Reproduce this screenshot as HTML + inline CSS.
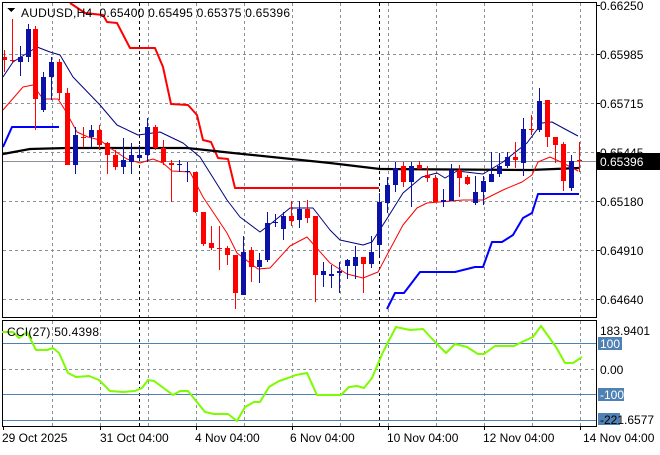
<!DOCTYPE html>
<html><head><meta charset="utf-8"><style>
html,body{margin:0;padding:0;background:#fff;}
body{width:660px;height:450px;overflow:hidden;font-family:"Liberation Sans",sans-serif;}
svg text{font-family:"Liberation Sans",sans-serif;font-size:12px;fill:#000;white-space:pre;}
</style></head><body>
<svg id="s" width="660" height="450" xmlns="http://www.w3.org/2000/svg" shape-rendering="crispEdges">
<rect width="660" height="450" fill="#fff"/>
<g id="grid" stroke="#8a9098" stroke-dasharray="3,3" stroke-width="1"></g>
<line x1="139.5" y1="3" x2="139.5" y2="317" stroke="#000" stroke-dasharray="3,3"/>
<line x1="379.5" y1="3" x2="379.5" y2="317" stroke="#000" stroke-dasharray="3,3"/>
<line x1="139.5" y1="321" x2="139.5" y2="426" stroke="#000" stroke-dasharray="3,3"/>
<line x1="379.5" y1="321" x2="379.5" y2="426" stroke="#000" stroke-dasharray="3,3"/>
<line x1="3" y1="161.5" x2="596" y2="161.5" stroke="#8a9098"/>
<g shape-rendering="auto" fill="none" stroke-linejoin="round">
<polyline stroke="#ff0000" stroke-width="2" points="70,3 85,13 103,15 107,22 117,23 130,48 155,48 163,67 171,104 188,105 197,115 203,140 211,142 218,158 228,159 235,188 379,188"/>
<polyline stroke="#0000ff" stroke-width="2" points="3,147 12,127 59,127"/>
<polyline stroke="#0000ff" stroke-width="2" points="387,309 395,293 404,293 420,272 455,272 475,267 483,267 492,242 502,242 513,235 523,218 532,213 538,194 579,194"/>
<polyline stroke="#000" stroke-width="2.2" points="3,154 30,149 67,148 187,148 233,153 330,163 380,169 530,170 579,168"/>
<polyline stroke="#000080" stroke-width="1" points="3,77 13,62 37,47 50,52 60,55 73,77 100,105 117,125 138,135 160,132 183,143 200,157 227,200 240,217 260,232 273,222 290,208 313,208 330,230 340,240 363,245 372,242 388,217 403,193 422,177 437,173 445,178 457,171 483,174 503,162 527,143 542,123 552,122 563,128 578,136"/>
<polyline stroke="#ff0000" stroke-width="1" points="3,110 23,87 33,85 43,99 58,99 65,110 77,132 88,137 100,140 110,148 127,159 140,163 153,159 163,163 172,171 190,172 203,197 227,233 237,253 258,269 270,268 290,246 307,237 330,263 347,274 363,278 378,272 388,253 403,225 417,208 427,203 463,200 483,200 503,190 522,182 532,175 538,162 550,157 563,163 578,171"/>
</g>
<g id="cd"></g>
<rect x="2.5" y="2.5" width="594" height="315" fill="none" stroke="#000"/>
<rect x="2.5" y="320.5" width="594" height="106" fill="none" stroke="#000"/>
<line x1="3" y1="343.5" x2="596" y2="343.5" stroke="#4f81b4"/>
<line x1="3" y1="394.5" x2="596" y2="394.5" stroke="#4f81b4"/>
<line x1="3" y1="420.5" x2="596" y2="420.5" stroke="#4f81b4"/>
<line x1="3" y1="369.5" x2="596" y2="369.5" stroke="#8a9098" stroke-dasharray="3,3"/>
<polyline shape-rendering="auto" fill="none" stroke="#7cfc00" stroke-width="2" stroke-linejoin="round" points="2,332 13,332 19,338 27,332 36,350 47,350 53,348 59,353 68,373 76,377 89,376 99,380 110,391 123,392 135,391 142,388 148,380 154,381 173,395 180,391 188,391 205,412 214,414 228,414 237,421 245,407 254,402 260,402 269,387 279,381 288,378 296,375 307,373 317,395 341,395 349,387 357,386 364,388 372,378 383,352 396,327 410,330 423,329 436,343 446,353 455,344 467,347 478,354 484,354 495,346 514,346 522,342 533,337 541,326 556,347 565,363 573,363 582,357"/>
<g stroke="#000" id="ticks"></g>
<g font-size="12">
<text x="600" y="10">0.66250</text>
<text x="600" y="59">0.65985</text>
<text x="600" y="108">0.65715</text>
<text x="600" y="157">0.65445</text>
<text x="600" y="206">0.65180</text>
<text x="600" y="255">0.64910</text>
<text x="600" y="304">0.64640</text>
</g>
<g stroke="#000"><line x1="596" y1="5.5" x2="600" y2="5.5"/><line x1="596" y1="54.5" x2="600" y2="54.5"/><line x1="596" y1="103.5" x2="600" y2="103.5"/><line x1="596" y1="152.5" x2="600" y2="152.5"/><line x1="596" y1="201.5" x2="600" y2="201.5"/><line x1="596" y1="250.5" x2="600" y2="250.5"/><line x1="596" y1="299.5" x2="600" y2="299.5"/></g>
<rect x="597" y="153" width="63" height="17" fill="#000"/>
<text x="600" y="166" style="fill:#fff">0.65396</text>
<text x="600" y="335">183.9401</text>
<rect x="598" y="337" width="24" height="13" fill="#4f81b4"/>
<text x="600" y="348" style="fill:#fff">100</text>
<text x="600" y="374">0.00</text>
<rect x="598" y="388" width="26" height="13" fill="#4f81b4"/>
<text x="600" y="399" style="fill:#fff">-100</text>
<rect x="598" y="413" width="22" height="12" fill="#4f81b4"/>
<text x="600" y="424">-221.6577</text>
<polygon points="7,8 15,8 11,12" fill="#000"/>
<text x="21" y="17" textLength="269" lengthAdjust="spacing">AUDUSD,H4  0.65400 0.65495 0.65375 0.65396</text>
<text x="7" y="336" textLength="92" lengthAdjust="spacing">CCI(27) 50.4398</text>
<g>
<text x="2" y="442">29 Oct 2025</text>
<text x="100" y="442">31 Oct 04:00</text>
<text x="195" y="442">4 Nov 04:00</text>
<text x="290" y="442">6 Nov 04:00</text>
<text x="387" y="442">10 Nov 04:00</text>
<text x="483" y="442">12 Nov 04:00</text>
<text x="583" y="442">14 Nov 04:00</text>
</g>
</svg>
<script>
var NS="http://www.w3.org/2000/svg";
function el(p,t,a){var e=document.createElementNS(NS,t);for(var k in a)e.setAttribute(k,a[k]);p.appendChild(e);return e;}
var g=document.getElementById('grid');
var xs=[52,100,148,196,244,292,340,388,436,484,532,580];
xs.forEach(function(x){el(g,'line',{x1:x+.5,y1:3,x2:x+.5,y2:317});el(g,'line',{x1:x+.5,y1:321,x2:x+.5,y2:426});});
[54,103,152,201,250,299].forEach(function(y){el(g,'line',{x1:3,y1:y+.5,x2:596,y2:y+.5});});
var tk=document.getElementById('ticks');
[3,100,196,292,388,484,580].forEach(function(x){el(tk,'line',{x1:x+.5,y1:426,x2:x+.5,y2:430});});
var C=[
[4,'r',57,60,50,72],[12,'r',60,61,19,62],[20,'b',57,62,46,76],[28,'b',29,57,24,62],[35,'r',29,99,26,130],[43,'b',77,110,72,112],[51,'b',62,77,57,100],[59,'r',62,93,59,100],[67,'r',93,165,88,165],[75,'b',135,165,127,174],[83,'r',137,138,127,147],[91,'b',130,137,125,147],[99,'r',130,145,125,150],[107,'r',143,155,142,174],[115,'r',155,167,150,170],[123,'b',160,167,138,174],[131,'b',155,162,143,174],[139,'b',155,158,145,160],[147,'b',127,155,118,162],[155,'r',127,148,125,150],[163,'r',148,162,140,165],[171,'r',163,165,160,202],[179,'b',164,165,160,172],[187,'b',171,172,162,182],[195,'r',172,212,172,213],[203,'r',212,244,212,246],[211,'r',243,248,226,250],[219,'r',248,249,226,270],[227,'r',248,255,246,265],[235,'r',255,293,255,309],[243,'b',252,295,236,295],[251,'r',250,267,247,282],[259,'b',260,267,253,283],[267,'b',223,260,212,262],[275,'b',222,223,214,227],[283,'b',216,229,212,240],[291,'r',216,221,201,226],[299,'b',209,220,201,228],[307,'r',209,218,200,223],[315,'r',216,275,216,302],[323,'b',271,275,262,287],[331,'b',274,276,265,288],[339,'b',271,273,262,293],[347,'b',260,266,259,279],[355,'b',257,266,246,279],[363,'r',257,264,257,293],[371,'b',252,264,236,268],[379,'b',202,245,193,255],[387,'b',185,203,177,213],[395,'b',168,185,162,192],[403,'r',166,182,162,187],[411,'b',166,182,162,207],[419,'r',165,169,161,169],[427,'r',175,178,166,182],[435,'r',178,202,175,202],[443,'b',200,202,189,207],[451,'b',170,201,164,201],[459,'r',170,178,165,197],[467,'r',177,184,175,185],[475,'b',192,203,176,205],[483,'b',181,192,176,205],[491,'b',174,182,152,182],[499,'b',166,174,153,177],[507,'b',157,166,152,168],[515,'r',157,160,142,168],[523,'b',129,163,118,176],[531,'r',129,130,115,135],[539,'b',101,130,88,132],[547,'r',100,137,100,147],[555,'r',137,145,137,163],[563,'r',144,181,142,191],[571,'b',161,188,155,191],[579,'r',160,161,142,172]];
var cd=document.getElementById('cd');
C.forEach(function(c){var col=c[1]=='r'?'#ff0000':'#0c12a8';
el(cd,'rect',{x:c[0],y:c[4],width:1,height:c[5]-c[4],fill:col});
el(cd,'rect',{x:c[0]-2,y:c[2],width:5,height:Math.max(1,c[3]-c[2]),fill:col});});
</script>
</body></html>
